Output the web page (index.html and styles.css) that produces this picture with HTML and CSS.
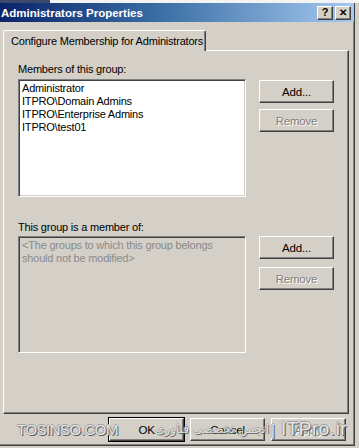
FILE: index.html
```html
<!DOCTYPE html>
<html lang="en">
<head>
  <meta charset="UTF-8">
  <title>Administrators Properties</title>
  <link rel="stylesheet" href="styles.css">
</head>
<body>
  <div class="screen">
    <div class="menu-strip">
      <div class="menu-dark"></div>
    </div>

    <div class="window">
      <div class="titlebar">
        <span class="title">Administrators Properties</span>
        <div class="caption-buttons">
          <button class="caption-btn">?</button>
          <button class="caption-btn close">&#x2715;</button>
        </div>
      </div>

      <div class="dialog">
        <div class="tabs">
          <div class="tab active">Configure Membership for Administrators</div>
        </div>

        <div class="panel">
          <div class="label">Members of this group:</div>
          <div class="group-row">
            <ul class="listbox">
              <li>Administrator</li>
              <li>ITPRO\Domain Admins</li>
              <li>ITPRO\Enterprise Admins</li>
              <li>ITPRO\test01</li>
            </ul>
            <div class="side-buttons">
              <button class="btn">Add...</button>
              <button class="btn" disabled>Remove</button>
            </div>
          </div>

          <div class="label second">This group is a member of:</div>
          <div class="group-row">
            <ul class="listbox disabled">
              <li>&lt;The groups to which this group belongs should not be modified&gt;</li>
            </ul>
            <div class="side-buttons loose">
              <button class="btn">Add...</button>
              <button class="btn" disabled>Remove</button>
            </div>
          </div>
        </div>

        <div class="footer">
          <button class="btn default">OK</button>
          <button class="btn">Cancel</button>
          <button class="btn" disabled>Apply</button>
        </div>
      </div>

      <!-- watermark over the footer -->
      <div class="watermark">
        <span class="wm-site">TOSINSO.COM</span>
        <span class="wm-fa" dir="rtl">انجمن تخصصی فناوری</span>
        <span class="wm-bar">|</span>
        <span class="wm-itpro">ITPro.ir</span>
      </div>
    </div>
  </div>
</body>
</html>
```

FILE: styles.css
```css
* {
  box-sizing: border-box;
}

body {
  margin: 0;
  background: #d4d0c8;
  font-family: "Liberation Sans", Arial, sans-serif;
  font-size: 11px;
  letter-spacing: -0.2px;
  color: #000;
}

.screen {
  width: 359px;
  height: 448px;
  overflow: hidden;
  background: #d4d0c8;
}

/* the window behind, only its menu bar peeks out */
.menu-strip {
  display: flex;
  height: 3px;
  background: #f4f4f4;
}

.menu-dark {
  width: 50px;
  background: #3a4a6a;
}

.window {
  position: relative;
  width: 355px;
  height: 443px;
  border-right: 1px solid #404040;
  border-bottom: 1px solid #404040;
  box-shadow: inset -1px -1px #808080;
}

.titlebar {
  display: flex;
  align-items: center;
  justify-content: space-between;
  height: 19px;
  padding: 0 3px 0 1px;
  background: linear-gradient(to right, #0a246a 0%, #3a6ea5 45%, #a6caf0 100%);
}

.title {
  color: #fff;
  font-weight: bold;
  font-size: 11.5px;
  letter-spacing: 0;
}

.caption-buttons {
  display: flex;
  gap: 2px;
}

.caption-btn {
  width: 16px;
  height: 14px;
  padding: 0;
  border: 1px solid;
  border-color: #fff #404040 #404040 #fff;
  box-shadow: inset -1px -1px #808080;
  background: #d4d0c8;
  font-family: "Liberation Sans", Arial, sans-serif;
  font-size: 11px;
  font-weight: bold;
  line-height: 11px;
  color: #000;
}

.caption-btn.close {
  font-size: 10px;
}

.dialog {
  padding: 8px 5px 0 3px;
}

.tabs {
  display: flex;
  position: relative;
  z-index: 1;
  margin-bottom: -1px;
}

.tab {
  width: 203px;
  height: 21px;
  padding: 4px 0 0 7px;
  border: 1px solid;
  border-color: #fff #404040 transparent #fff;
  border-bottom: 0;
  box-shadow: inset -1px 0 #808080;
  border-radius: 2px 2px 0 0;
  background: #d4d0c8;
  font-size: 11px;
  white-space: nowrap;
}

.panel {
  height: 364px;
  padding: 12px 0 0 14px;
  border: 1px solid;
  border-color: #fff #404040 #404040 #fff;
  box-shadow: inset -1px -1px #808080;
}

.label {
  height: 13px;
  line-height: 13px;
  margin-bottom: 3px;
}

.label.second {
  margin-top: 24px;
  margin-bottom: 2px;
}

.group-row {
  display: flex;
  gap: 13px;
}

.listbox {
  width: 228px;
  height: 118px;
  margin: 0;
  padding: 2px 0 0 3px;
  list-style: none;
  background: #fff;
  border: 1px solid;
  border-color: #808080 #fff #fff #808080;
  box-shadow: inset 1px 1px #404040, inset -1px -1px #d4d0c8;
}

.listbox li {
  line-height: 13px;
}

.listbox.disabled {
  height: 117px;
  background: #d4d0c8;
  color: #8a8a8a;
  padding-right: 10px;
}

.side-buttons {
  display: flex;
  flex-direction: column;
  gap: 6px;
  padding-top: 1px;
}

.side-buttons.loose {
  gap: 8px;
  padding-top: 0;
}

.btn {
  width: 75px;
  height: 23px;
  padding: 0;
  border: 1px solid;
  border-color: #fff #404040 #404040 #fff;
  box-shadow: inset -1px -1px #808080;
  background: #d4d0c8;
  font-family: "Liberation Sans", Arial, sans-serif;
  font-size: 11.5px;
  letter-spacing: -0.2px;
  color: #000;
}

.btn:disabled {
  color: #808080;
  text-shadow: 1px 1px #fff;
}

.btn.default {
  outline: 1px solid #000;
  outline-offset: 0;
}

.footer {
  display: flex;
  justify-content: flex-end;
  gap: 6px;
  padding: 4px 3px 0 0;
}

.watermark {
  position: absolute;
  left: 17px;
  top: 414px;
  display: flex;
  align-items: center;
  height: 24px;
  gap: 2px;
  color: #e6e6e6;
  font-family: "Liberation Sans", Arial, sans-serif;
  letter-spacing: 0;
  text-shadow: 1px 1px 0 #5a5a5a, -1px 0 0 #a0a0a0, 0 -1px 0 #a0a0a0;
  pointer-events: none;
}

.wm-site {
  width: 102px;
  font-size: 15px;
  letter-spacing: -0.5px;
}

.wm-fa {
  width: 148px;
  font-family: "DejaVu Sans", sans-serif;
  font-size: 12px;
  letter-spacing: 1px;
  opacity: 0.85;
}

.wm-bar {
  font-size: 15px;
}

.wm-itpro {
  margin-left: 4px;
  font-size: 19px;
  letter-spacing: 0.5px;
}
```
